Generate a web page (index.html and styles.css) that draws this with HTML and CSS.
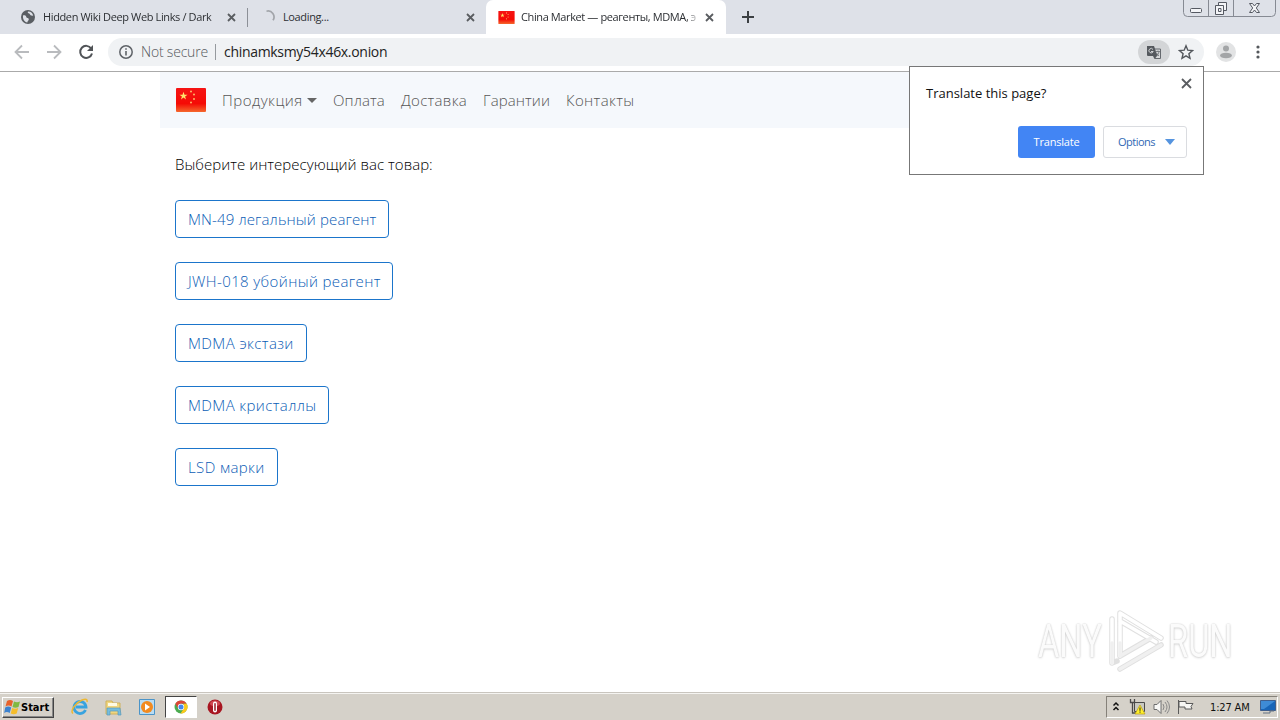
FILE: index.html
```html
<!DOCTYPE html>
<html lang="ru">
    <head>
        <meta charset="utf-8">
        <title>China Market — реагенты, MDMA, экстази</title>
        <link rel="stylesheet" href="styles.css">
    </head>
    <body>
        <!-- shared flag, used in the tab and in the navbar -->
        <svg class="defs" width="0" height="0">
            <defs>
                <linearGradient id="red" x1="0" y1="0" x2="0" y2="1">
                    <stop offset="0" stop-color="#f51414"/>
                    <stop offset=".65" stop-color="#f50b05"/>
                    <stop offset="1" stop-color="#f5682d"/>
                </linearGradient>
                <symbol id="flag" viewBox="0 0 30 24">
                    <rect width="30" height="24" rx="1" fill="url(#red)"/>
                    <path d="M7.5 3.8l1 2.9h3l-2.4 1.8.9 2.9-2.5-1.8L5 11.4l.9-2.9-2.4-1.8h3z" fill="#ffe36b"/>
                    <g fill="#ffb868"><circle cx="15" cy="3.5" r="1"/><circle cx="18" cy="6.5" r="1"/><circle cx="18" cy="11" r="1"/><circle cx="15" cy="14.5" r="1"/></g>
                </symbol>
            </defs>
        </svg>

        <header class="tabs">
            <div class="tab tab-first">
                <svg width="14" height="14" viewBox="0 0 14 14"><circle cx="7" cy="7" r="7" fill="#5a5e63"/><path d="M2 5.5c2-.5 3 .2 3.300 1.500.4 1.300 2.700.8 2.500 2.500-.1 1.200-1.300 1.300-1.500 3C3.500 12 1.600 9.500 2 5.500zM7 1.600c-.8 1.200.2 1.700 1.200 1.900 1 .3.6 1.700 1.800 1.900.8.200 1.500 0 2.200.6C12 3.500 10 1.500 7 1.600z" fill="#dee1e8"/></svg>
                <span class="title fade">Hidden Wiki Deep Web Links / Dark</span>
                <svg class="x" width="9" height="9" viewBox="0 0 9 9"><path d="M1 1l7 7M8 1l-7 7"/></svg>
            </div>
            <div class="tab tab-second">
                <svg width="14" height="14" viewBox="0 0 14 14"><path d="M5.500 1.200A6 6 0 0 1 12 10.300" fill="none" stroke="#a2a5aa" stroke-width="1.700"/></svg>
                <span class="title loading">Loading...</span>
                <svg class="x" width="9" height="9" viewBox="0 0 9 9"><path d="M1 1l7 7M8 1l-7 7"/></svg>
            </div>
            <div class="tab tab-active">
                <svg width="17" height="13"><use href="#flag" width="17" height="13"/></svg>
                <span class="title market fade">China Market — реагенты, MDMA, э</span>
                <svg class="x" width="9" height="9" viewBox="0 0 9 9"><path d="M1 1l7 7M8 1l-7 7"/></svg>
            </div>
            <svg class="plus" width="12" height="12" viewBox="0 0 12 12"><path d="M6 0v12M0 6h12" stroke="#3c4043" stroke-width="2"/></svg>
            <svg class="window" width="94" height="17" viewBox="0 0 94 17">
                <path d="M.5 0v12.500q0 4 4 4h84q4 0 4-4V0M25.500 0v16M50.500 0v16" fill="none" stroke="#868a93"/>
                <g fill="#f3f4f7" stroke="#555962">
                    <rect x="7.500" y="8.500" width="11" height="4" rx="1"/>
                    <path d="M35.500 2.500h8v8h-8z"/><path d="M32.500 5.500h8v9h-8z"/><path d="M35.500 8.500h2.500v3h-2.500z"/>
                    <path d="M66.500 3.500h3l2 2.500 2-2.500h3l-3.200 4.500 3.200 4.500h-3l-2-2.500-2 2.500h-3L69.700 8z"/>
                </g>
            </svg>
        </header>

        <div class="toolbar">
            <svg class="nav" width="108" height="36" viewBox="0 0 108 36" fill="none" stroke="#b9bbbe" stroke-width="1.800">
                <path d="M29 18H16M22 11.500L15.500 18l6.500 6.500M47 18h13M54 11.500l6.500 6.500-6.500 6.500"/>
                <path d="M91.200 14.500A6 6 0 1 0 92 19.500" stroke="#505357" stroke-width="2"/>
                <path d="M93 11v6h-6z" fill="#505357" stroke="none"/>
            </svg>
            <div class="omnibox">
                <svg width="14" height="14" viewBox="0 0 14 14"><circle cx="7" cy="7" r="6.200" fill="none" stroke="#5f6368" stroke-width="1.500"/><path d="M7 6v4.500M7 3.300v1.500" stroke="#5f6368" stroke-width="1.600"/></svg>
                <span class="secure">Not secure</span>
                <span class="url">chinamksmy54x46x.onion</span>
                <span class="lang">
                    <svg width="16" height="15" viewBox="0 0 16 15"><path d="M7 4h7.500v9.500H9z" fill="#d5d7d9" stroke="#65696e"/><path d="M1 1h7l3.500 10H2q-1 0-1-1z" fill="#55595e"/><path d="M7 4.500A2.200 2.200 0 1 0 7.200 6.500H5" fill="none" stroke="#d0d2d4"/><path d="M9.500 6.500H14M12 5.500v1M13 7q-1 3-2.500 4M10.500 8q1 2 2.500 3" fill="none" stroke="#65696e" stroke-width=".8"/><path d="M7 11h4l-2.500 3z" fill="#55595e"/></svg>
                </span>
                <svg class="star" width="16" height="16" viewBox="0 0 16 16"><path d="M8 1.800l1.800 4.400 4.700.4-3.600 3.100 1.100 4.600-4-2.500-4 2.500 1.100-4.600-3.600-3.100 4.700-.4z" fill="none" stroke="#53575c" stroke-width="1.400"/></svg>
            </div>
            <svg class="avatar" width="20" height="20" viewBox="0 0 20 20"><circle cx="10" cy="10" r="10" fill="#e2e3e4"/><circle cx="10" cy="6.500" r="3" fill="#a3a5a7"/><ellipse cx="10" cy="13.500" rx="6" ry="2.800" fill="#a3a5a7"/></svg>
            <svg class="dots" width="4" height="14" viewBox="0 0 4 14" fill="#55585c"><circle cx="2" cy="2" r="1.600"/><circle cx="2" cy="7" r="1.600"/><circle cx="2" cy="12" r="1.600"/></svg>
        </div>

        <main class="page">
            <nav class="navbar">
                <svg class="brand" width="30" height="24"><use href="#flag" width="30" height="24"/></svg>
                <a class="dropdown">Продукция</a>
                <a class="pay">Оплата</a>
                <a class="ship">Доставка</a>
                <a class="warranty">Гарантии</a>
                <a class="contacts">Контакты</a>
            </nav>
            <section class="content">
                <p>Выберите интересующий вас товар:</p>
                <a class="btn btn-mn">MN-49 легальный реагент</a>
                <a class="btn btn-jwh">JWH-018 убойный реагент</a>
                <a class="btn btn-ecstasy">MDMA экстази</a>
                <a class="btn btn-crystal">MDMA кристаллы</a>
                <a class="btn btn-lsd">LSD марки</a>
            </section>
        </main>

        <div class="popup">
            <div class="popup-head">
                <span>Translate this page?</span>
                <svg class="x" width="11" height="11" viewBox="0 0 11 11"><path d="M1 1l9 9M10 1l-9 9"/></svg>
            </div>
            <div class="popup-buttons">
                <span class="translate">Translate</span>
                <span class="options">Options <i></i></span>
            </div>
        </div>

        <div class="watermark">
            <span class="any">ANY</span>
            <svg width="60" height="64" viewBox="0 0 60 64" fill="none" stroke-linejoin="round" stroke-linecap="round">
                <g stroke="#e0e0e0" stroke-width="5.500"><path d="M12 47V4l41 25M12 12l36 21M4 10v44l5-2M12 47l31-18M12 60l41-24"/></g>
                <g stroke="#fff" stroke-width="3.500"><path d="M12 47V4l41 25M12 12l36 21M4 10v44"/></g>
                <path d="M12 47l31-18M12 60l41-24M4 34v20M12 34v13" stroke="#f0f0f0" stroke-width="3.500"/>
            </svg>
            <span class="run">RUN</span>
        </div>

        <footer class="taskbar">
            <div class="start">
                <svg width="17" height="16" viewBox="0 0 17 16"><path d="M3 2q3-2 6 0L7.500 7.500q-3-2-6 0z" fill="#e8622b"/><path d="M10 2.500q3 1.500 6 0L14.500 8q-3 1.500-6 0z" fill="#80b941"/><path d="M1.200 8.500q3-2 6 0L5.700 14q-3-2-5.500 0z" fill="#3c82cf"/><path d="M8.200 9q3 1.500 6 0l-1.500 5.500q-3 1.500-6 0z" fill="#f5bd2b"/></svg>
                <span>Start</span>
            </div>
            <svg class="ie" width="18" height="18" viewBox="0 0 18 18"><path d="M14.500 12A6 6 0 1 1 15 9H5" fill="none" stroke="#38a3df" stroke-width="2.800"/><path d="M2 15.500C-1 13 4 5 11 2q6-2 5 2" fill="none" stroke="#edb832" stroke-width="1.500"/></svg>
            <svg class="folder" width="17" height="17" viewBox="0 0 17 17"><path d="M1 2h6l1 2h7v11H1z" fill="#f0d67f" stroke="#cfb15c"/><path d="M3 4h9v3H3z" fill="#fffbe3"/><path d="M2 9h13l1 7h-3v-4H5v4H2z" fill="#75bddd" stroke="#5798bd" stroke-width=".7"/></svg>
            <svg class="media" width="16" height="16" viewBox="0 0 16 16"><path d="M.5.5h15v15H.5z" fill="#b9dcf3" stroke="#4b94c8"/><circle cx="8" cy="8" r="6" fill="#f28a1f"/><path d="M6 4.500l5 3.500-5 3.500z" fill="#fff"/></svg>
            <div class="chrome">
                <svg width="14" height="14" viewBox="0 0 14 14"><circle cx="7" cy="7" r="6.500" fill="#4aab50"/><path d="M1.300 3.800A6.500 6.500 0 0 1 12.700 3.800H7L4.200 8.600z" fill="#dc4637"/><path d="M12.700 3.800A6.500 6.500 0 0 1 6.500 13.500L9.800 8.500 9.500 3.800z" fill="#fbc91b"/><circle cx="7" cy="7" r="3.200" fill="#fff"/><circle cx="7" cy="7" r="2.500" fill="#4287ec"/></svg>
            </div>
            <svg class="opera" width="16" height="16" viewBox="0 0 16 16"><circle cx="8" cy="8" r="7.500" fill="#a81621"/><ellipse cx="8" cy="4.500" rx="5" ry="3" fill="#cf4850"/><rect x="6" y="2.500" width="4" height="11" rx="2" fill="#fff"/><rect x="7.300" y="4" width="1.400" height="8" rx=".7" fill="#8d0f18"/></svg>
            <div class="tray">
                <svg width="90" height="18" viewBox="0 0 90 18">
                    <path d="M6.500 7.500L9 5l2.500 2.500M6.500 12L9 9.500l2.500 2.500" fill="none" stroke="#111" stroke-width="1.500"/>
                    <path d="M27.500 4.500h10v9h-10z" fill="#c9c9c1" stroke="#4a4a4a"/><path d="M23.500 1v3.500h4V1M25.500 5v10h4" fill="none" stroke="#4a4a4a" stroke-width="1.300"/><path d="M33 7l5 9H28z" fill="#fff02a" stroke="#ba9c16" stroke-width=".7"/><path d="M33 9.500v3.300M33 13.500v1.200" stroke="#222"/>
                    <path d="M47 6.500h3l4-4v13l-4-4h-3z" fill="#f8f8f6" stroke="#6e6e6e"/><path d="M56 6q2 3 0 6M58 4q4 5 0 10M60 2.500q5 6.500 0 13" fill="none" stroke="#898989" stroke-width="1"/>
                    <path d="M71.500 2v14M72 3.500h7v2h7l-2 3 1 2.500h-7v-2h-6z" fill="#f6f6f3" stroke="#5a5a5a"/>
                </svg>
                <time>1:27 AM</time>
                <svg class="desktop" width="16" height="14" viewBox="0 0 16 14"><path d="M.5.500h15v10H.5z" fill="#1865b8" stroke="#405f8d"/><path d="M1 1h14L4 9H1z" fill="#3e8bd6"/><path d="M3 13h7v-2h4" stroke="#627182" fill="none"/></svg>
            </div>
        </footer>
    </body>
</html>
```

FILE: styles.css
```css
* {
    box-sizing: border-box;
}
body {
    margin: 0;
    width: 1280px;
    height: 720px;
    overflow: hidden;
    display: flex;
    flex-direction: column;
    background: #fff;
    color: #111;
    font-family: "Open Sans", sans-serif;
}
svg {
    flex: none;
    display: block;
}
.defs {
    position: absolute;
}
.x {
    fill: none;
    stroke: #5a5d61;
    stroke-width: 1.8;
}

/* tab strip */
.tabs {
    height: 34px;
    flex: none;
    display: flex;
    background: #dee1e8;
    font-size: 11px;
}
.tab {
    display: flex;
    align-items: center;
    height: 34px;
}
.tab-first {
    width: 247px;
    padding-left: 21px;
}
.tab-second {
    width: 239px;
    padding-left: 14px;
    position: relative;
}
.tab-second::before {
    content: "";
    position: absolute;
    left: 0;
    top: 8px;
    width: 1px;
    height: 19px;
    background: #8c9097;
}
.tab-active {
    width: 240px;
    padding-left: 12px;
    background: #fff;
    border-radius: 7px 7px 0 0;
}
.title {
    width: 176px;
    margin: 0 8px;
    padding-bottom: 2px;
    overflow: hidden;
    white-space: nowrap;
    color: #2c2f33;
    letter-spacing: -0.37px;
}
.loading {
    margin: 0 7px 0 8px;
}
.market {
    margin: 0 8px 0 6px;
    letter-spacing: -0.39px;
}
.fade {
    -webkit-mask-image: linear-gradient(to right, #000 166px, transparent 178px);
    mask-image: linear-gradient(to right, #000 166px, transparent 178px);
}
.plus {
    margin: 11px 0 0 16px;
}
.window {
    margin-left: auto;
    margin-right: 3px;
}

/* address bar */
.toolbar {
    height: 38px;
    flex: none;
    display: flex;
    align-items: center;
    padding-bottom: 1px;
    border-bottom: 1px solid #aaa;
}
.omnibox {
    width: 1096px;
    height: 28px;
    display: flex;
    align-items: center;
    padding-left: 11px;
    border-radius: 14px;
    background: #f0f2f4;
    font-size: 14px;
}
.secure {
    width: 75px;
    margin-left: 8px;
    height: 16px;
    line-height: 15px;
    border-right: 1px solid #969a9e;
    white-space: nowrap;
    color: #55585c;
    font-weight: 300;
    letter-spacing: -0.2px;
}
.url {
    margin-left: 8px;
    padding-bottom: 1px;
    color: #222;
    letter-spacing: -0.31px;
}
.lang {
    width: 32px;
    height: 24px;
    margin-left: auto;
    padding: 5px 8px;
    border-radius: 12px;
    background: #d3d5d7;
}
.star {
    margin: 0 10px 0 8px;
}
.avatar {
    margin-left: 12px;
}
.dots {
    margin-left: 20px;
}

/* shop page */
.page {
    width: 960px;
    flex: 1;
    margin: 0 auto;
    font-size: 15px;
    font-weight: 300;
}
.navbar {
    height: 56px;
    display: flex;
    align-items: center;
    gap: 16px;
    padding: 0 16px;
    background: #f5f8fc;
    color: #555;
}
.navbar a {
    white-space: nowrap;
}
.dropdown {
    width: 95px;
    display: flex;
    align-items: center;
    justify-content: space-between;
    letter-spacing: 0.5px;
}
.dropdown::after {
    content: "";
    border: 5px solid transparent;
    border-top-color: #666;
    border-bottom: 0;
}
.pay {
    width: 52px;
    letter-spacing: 0.1px;
}
.ship {
    width: 66px;
    letter-spacing: 0.3px;
}
.warranty {
    width: 67px;
    letter-spacing: 0.1px;
}
.contacts {
    letter-spacing: 0.35px;
}
.content {
    display: flex;
    flex-direction: column;
    align-items: flex-start;
    gap: 24px;
    padding: 25px 15px;
}
.content p {
    margin: 0;
    line-height: 23px;
    color: #000;
    letter-spacing: 0.03px;
}
.btn {
    height: 38px;
    padding: 0 12px;
    border: 1px solid #1b75cb;
    border-radius: 4px;
    line-height: 36px;
    white-space: nowrap;
    color: #0b5cb5;
    letter-spacing: 0.38px;
}
.btn-mn {
    width: 214px;
    letter-spacing: 0.13px;
}
.btn-jwh {
    width: 218px;
}
.btn-ecstasy {
    width: 132px;
}
.btn-crystal {
    width: 154px;
}
.btn-lsd {
    width: 103px;
}

/* translate bubble */
.popup {
    position: absolute;
    left: 909px;
    top: 66px;
    width: 295px;
    height: 109px;
    padding: 11px 11px 0 16px;
    background: #fff;
    border: 1px solid #777;
}
.popup-head {
    display: flex;
    justify-content: space-between;
    height: 48px;
    font-size: 13px;
    line-height: 30px;
}
.popup-buttons {
    display: flex;
    justify-content: flex-end;
    gap: 8px;
    padding-right: 5px;
    font-size: 11px;
    line-height: 32px;
}
.translate {
    width: 77px;
    height: 32px;
    border-radius: 3px;
    background: #4285f4;
    color: #fff;
    text-align: center;
    letter-spacing: -0.2px;
}
.options {
    width: 84px;
    height: 32px;
    display: flex;
    align-items: center;
    justify-content: space-between;
    padding: 0 11px 0 14px;
    border: 1px solid #dadce0;
    border-radius: 3px;
    color: #3168b4;
    letter-spacing: -0.5px;
}
.options i {
    border: 5px solid transparent;
    border-top: 6px solid #5594df;
    border-bottom: 0;
}

/* ANY.RUN mark over the page */
.watermark {
    position: absolute;
    left: 1038px;
    top: 608px;
    width: 194px;
    display: flex;
    align-items: center;
    justify-content: space-between;
    color: #fbfbfb;
    font: 46px/66px Roboto, sans-serif;
    text-shadow: 0 0 2px #c4c4c4, 0 1px 3px #ddd;
}
.any, .run {
    width: 64px;
    transform: scaleX(.71);
    transform-origin: 0 50%;
}
.watermark svg {
    margin-left: 5px;
}

/* taskbar */
.taskbar {
    height: 28px;
    flex: none;
    display: flex;
    align-items: center;
    padding: 3px 2px 2px;
    background: #d5d1c9;
    border-top: 1px solid #c9c5be;
    box-shadow: inset 0 1px #f5f4f1;
}
.start {
    width: 52px;
    height: 21px;
    display: flex;
    align-items: center;
    padding-left: 1px;
    border: 1px solid;
    border-color: #fff #444 #444 #fff;
    box-shadow: inset -1px -1px #888;
    color: #000;
    font: bold 11px "DejaVu Sans Condensed", sans-serif;
}
.ie {
    margin-left: 17px;
}
.folder {
    margin-left: 16px;
}
.media {
    margin-left: 17px;
}
.chrome {
    width: 32px;
    height: 22px;
    margin-left: 10px;
    padding: 3px 8px;
    border: 1px solid;
    border-color: #444 #fff #fff #444;
    background: #fff;
}
.opera {
    margin-left: 10px;
}
.tray {
    width: 172px;
    height: 22px;
    display: flex;
    align-items: center;
    margin-left: auto;
    border: 1px solid;
    border-color: #858179 #fff #fff #858179;
}
.tray time {
    width: 50px;
    margin-left: 13px;
    white-space: nowrap;
    color: #111;
    font: 11px "DejaVu Sans Condensed", sans-serif;
    letter-spacing: -0.15px;
}
```
